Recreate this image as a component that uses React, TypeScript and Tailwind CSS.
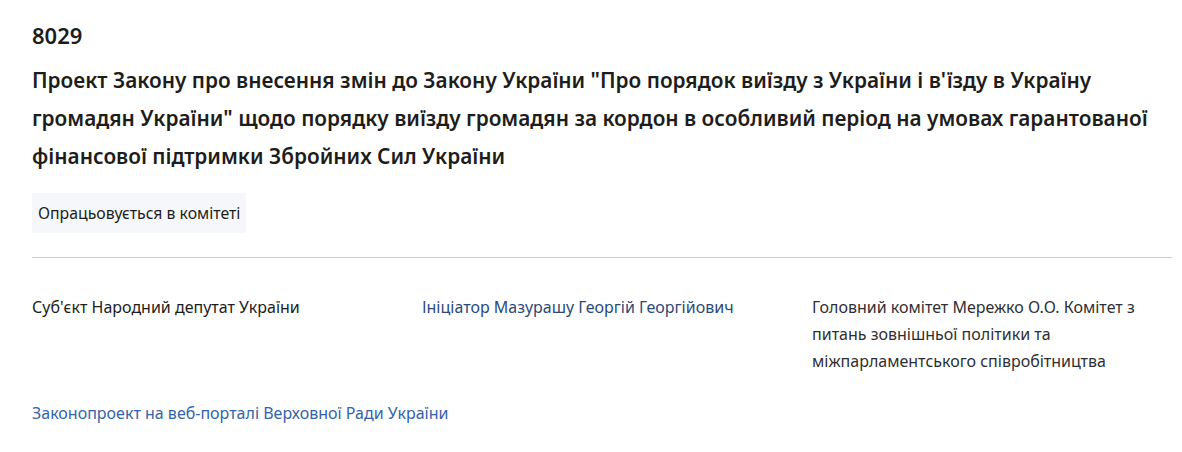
export default function App() {
  return (
    <div className="bg-white pl-8 pr-[10px] pt-[21px] text-[#1d1d1b]" style={{ fontFamily: '"Noto Sans", Lato, sans-serif' }}>
      <div className="text-[22px] font-semibold leading-[28px]">8029</div>
      <h1 className="mt-[12px] text-[20.8px] font-semibold leading-[38px]">
        Проект Закону про внесення змін до Закону України "Про порядок виїзду з України і в'їзду в Україну громадян
        України" щодо порядку виїзду громадян за кордон в особливий період на умовах гарантованої фінансової підтримки
        Збройних Сил України
      </h1>
      <div className="mt-[18px] inline-block bg-[#f5f7fa] px-[6px] py-[10px] text-[15.8px] leading-[20px]">
        Опрацьовується в комітеті
      </div>
      <hr className="mt-[24px] border-t border-[#cccccc]" />
      <div className="mt-[36px] grid grid-cols-3 gap-[30px] text-[16px] leading-[27px]">
        <div>Суб'єкт Народний депутат України</div>
        <div className="text-[#2c4a78]">Ініціатор Мазурашу Георгій Георгійович</div>
        <div className="text-[#2f2f33]">
          Головний комітет Мережко О.О. Комітет з питань зовнішньої політики та міжпарламентського співробітництва
        </div>
      </div>
      <a href="#" className="mt-[25px] block text-[16px] leading-[27px] text-[#3563a8]">
        Законопроект на веб-порталі Верховної Ради України
      </a>
    </div>
  );
}
